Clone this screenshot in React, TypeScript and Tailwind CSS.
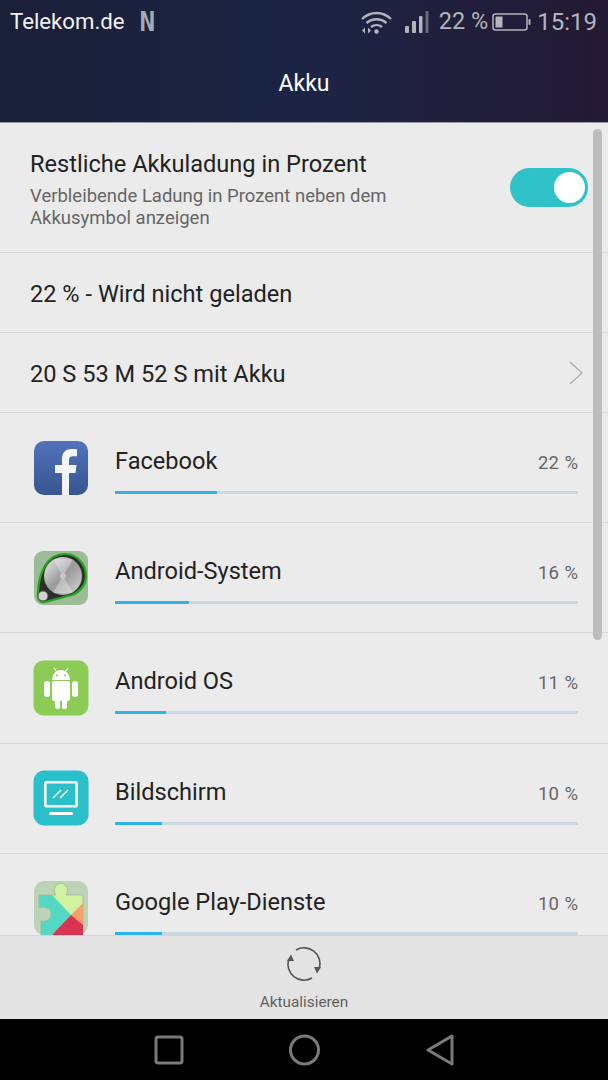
import { ReactNode } from "react";

const APPS: { name: string; pct: number; bar: number; icon: ReactNode }[] = [
  { name: "Facebook", pct: 22, bar: 102, icon: <FacebookIcon /> },
  { name: "Android-System", pct: 16, bar: 74, icon: <SystemIcon /> },
  { name: "Android OS", pct: 11, bar: 51, icon: <DroidIcon /> },
  { name: "Bildschirm", pct: 10, bar: 47, icon: <ScreenIcon /> },
  { name: "Google Play-Dienste", pct: 10, bar: 47, icon: <PlayIcon /> },
];

function FacebookIcon() {
  return (
    <svg width="56" height="56" viewBox="0 0 56 56">
      <defs>
        <linearGradient id="fb" x1="0" y1="0" x2="0" y2="1">
          <stop offset="0" stopColor="#5273bd" />
          <stop offset="1" stopColor="#37558f" />
        </linearGradient>
      </defs>
      <rect x="1" y="1" width="54" height="54" rx="10" fill="url(#fb)" />
      <path
        d="M29 55V33h-7v-8h7v-6c0-7 4-10 10-10 2.500 0 4 .2 5 .3v7h-4c-3 0-4 1.500-4 4v4.700h7.500l-1 8H36v22z"
        fill="#f3f5f9"
      />
    </svg>
  );
}

function SystemIcon() {
  return (
    <svg width="56" height="56" viewBox="0 0 56 56">
      <defs>
        <linearGradient id="knob" x1="0" y1="0" x2="1" y2="1">
          <stop offset="0" stopColor="#eeeeee" />
          <stop offset="0.5" stopColor="#9a9a9a" />
          <stop offset="1" stopColor="#d5d5d5" />
        </linearGradient>
      </defs>
      <rect x="1" y="1" width="54" height="54" rx="9" fill="#9dbb96" />
      <path
        d="M5 42C6 24 13 4 32 4c12 0 21 10 21 22 0 9-6 16-14 19L12 52c-5 1-8-3-7-10z"
        fill="#2e2e2e"
        stroke="#1fa81f"
        strokeWidth="2.200"
      />
      <circle cx="30" cy="26" r="19" fill="url(#knob)" />
      <path d="M30 26L20 9h20zM30 26L20 43h20z" fill="#f4f4f4" opacity="0.35" />
      <circle cx="30" cy="26" r="3" fill="#c8c8c8" />
      <circle cx="10" cy="46" r="5" fill="#d2d2d2" stroke="#555" strokeWidth="1" />
    </svg>
  );
}

function DroidIcon() {
  return (
    <svg width="56" height="56" viewBox="0 0 56 56">
      <rect x="0.500" y="0.500" width="55" height="55" rx="10" fill="#8bcb56" />
      <g fill="#fff">
        <path d="M19 20c.5-6 4-10 9-10s8.500 4 9 10z" />
        <rect x="19" y="21" width="18" height="20" rx="2" />
        <rect x="11" y="21" width="6" height="16" rx="3" />
        <rect x="39" y="21" width="6" height="16" rx="3" />
        <rect x="22" y="38" width="5" height="11" rx="2.500" />
        <rect x="29" y="38" width="5" height="11" rx="2.500" />
      </g>
      <path d="M21 8l3 4M35 8l-3 4" stroke="#fff" strokeWidth="1.200" />
      <circle cx="24" cy="15.500" r="1" fill="#8bcb56" />
      <circle cx="32" cy="15.500" r="1" fill="#8bcb56" />
    </svg>
  );
}

function ScreenIcon() {
  return (
    <svg width="56" height="56" viewBox="0 0 56 56">
      <rect x="0.500" y="0.500" width="55" height="55" rx="11" fill="#2ac0c9" />
      <rect x="12.300" y="12.300" width="31.400" height="24" rx="1.500" fill="none" stroke="#fff" strokeWidth="2.600" />
      <path d="M20 28l8-8M27 28l8-8" stroke="#fff" strokeWidth="1.500" />
      <rect x="16" y="42" width="24" height="3" rx="1.500" fill="#fff" />
    </svg>
  );
}

function PlayIcon() {
  return (
    <svg width="56" height="56" viewBox="0 0 56 56">
      <rect x="1" y="1" width="54" height="54" rx="10" fill="#bcd3b4" />
      <path
        d="M6 15h17c-2-3-3-10 5-12 8 2 7 9 5 12h17v41H8V41c6 1 10-2 10-7s-4-8-12-6z"
        fill="#cff3a0"
        stroke="#9aa79a"
        strokeWidth="0.600"
      />
      <path d="M6 15h13l19 20-20 21H8V41c6 1 10-2 10-7s-4-8-12-6z" fill="#54d8c4" />
      <path d="M38 35l12-12v22z" fill="#f5a06d" />
      <path d="M38 35l12 10v11H18z" fill="#d83350" />
    </svg>
  );
}

function WifiIcon() {
  return (
    <svg width="31" height="23" viewBox="0 0 31 23" fill="none" stroke="#b4b4bc" strokeWidth="2.400">
      <path d="M1 8c8.500-8 20.500-8 29 0" />
      <path d="M5.500 12c6-5 14-5 20 0" />
      <path d="M10 16c3.200-2.500 7.800-2.500 11 0" />
      <circle cx="15.500" cy="20.500" r="2.200" fill="#b4b4bc" stroke="none" />
      <path d="M1 19.500l3-3v6zM10 19.500l-3-3v6z" fill="#b4b4bc" stroke="none" />
    </svg>
  );
}

function SignalIcon() {
  return (
    <svg width="24" height="22" viewBox="0 0 24 22" fill="#b4b4bc">
      <rect x="0" y="15" width="4" height="7" rx="1" />
      <rect x="7" y="10" width="4" height="12" rx="1" />
      <rect x="14" y="5" width="3.500" height="17" rx="1" />
      <rect x="20.500" y="0" width="3" height="22" fill="#6b6b72" />
    </svg>
  );
}

function BatteryIcon() {
  return (
    <svg width="39" height="18" viewBox="0 0 39 18">
      <rect x="1" y="1" width="34" height="16" rx="2.500" fill="none" stroke="#b4b4bc" strokeWidth="1.500" />
      <rect x="3.500" y="3.500" width="7" height="11" fill="#b4b4bc" />
      <rect x="36.500" y="6" width="2" height="6" rx="1" fill="#b4b4bc" />
    </svg>
  );
}

function AppRow({ name, pct, bar, icon }: { name: string; pct: number; bar: number; icon: ReactNode }) {
  return (
    <div className="flex h-[110.200px] shrink-0 border-b border-[#d9d9d9] pl-[33px] pr-[30px]">
      <div className="mt-[26.500px] h-14 w-14 shrink-0">{icon}</div>
      <div className="ml-[26px] flex-1 pt-[31px]">
        <div className="flex items-center justify-between">
          <span className="text-[23.600px] leading-[34px] text-[#222222]">{name}</span>
          <span className="translate-y-[2px] text-[18.500px] leading-[34px] text-[#666666] [word-spacing:1px]">{pct} %</span>
        </div>
        <div className="mt-[13px] h-[3px] w-full bg-[#ccd8df]">
          <div className="h-[3px] bg-[#2db4e8]" style={{ width: bar }} />
        </div>
      </div>
    </div>
  );
}

export default function App() {
  return (
    <div className="flex h-[1080px] w-[608px] flex-col overflow-hidden bg-[#ebebeb] font-['Roboto',sans-serif]">
      <header className="h-[122px] shrink-0 bg-gradient-to-r from-[#1a2038] via-[#1c2445] to-[#231a33]">
        <div className="flex h-[44px] items-center pl-[10px] pr-[11px]">
          <span className="text-[22.200px] text-[#f2f2f2]">Telekom.de</span>
          <span className="ml-[15px] font-['DejaVu_Sans_Mono',monospace] text-[26px] leading-none font-bold text-[#a9a9b0]">N</span>
          <div className="ml-auto flex items-center">
            <WifiIcon />
            <div className="ml-[13px]">
              <SignalIcon />
            </div>
            <span className="ml-[10px] text-[23.500px] text-[#b4b4bc]">22 %</span>
            <div className="ml-[4px]">
              <BatteryIcon />
            </div>
            <span className="ml-[6px] text-[24px] text-[#b4b4bc]">15:19</span>
          </div>
        </div>
        <div className="mt-[24px] text-center text-[23px] leading-[32px] text-white">Akku</div>
      </header>
      <div className="h-[1px] shrink-0 bg-[#9a9a9a]" />

      <main className="relative min-h-0 flex-1 overflow-hidden">
        <div className="box-content flex h-[129px] border-b border-[#d9d9d9] pl-[30px] pr-[20px]">
          <div className="flex-1 pt-[25px]">
            <div className="text-[23.600px] leading-[32px] text-[#222222]">Restliche Akkuladung in Prozent</div>
            <div className="mt-[5px] w-[380px] text-[18.500px] leading-[22px] text-[#666666]">
              Verbleibende Ladung in Prozent neben dem Akkusymbol anzeigen
            </div>
          </div>
          <div className="mt-[45px] flex h-[39px] w-[78px] items-center justify-end rounded-full bg-[#2fc2c9] pr-[3px]">
            <div className="h-[31px] w-[31px] rounded-full bg-white" />
          </div>
        </div>
        <div className="flex h-20 items-center border-b border-[#d9d9d9] pl-[30px] pt-[4px] text-[23.600px] text-[#222222]">
          22 % - Wird nicht geladen
        </div>
        <div className="flex h-20 items-center justify-between border-b border-[#d9d9d9] pl-[30px] pr-[25px] text-[23.600px] text-[#222222]">
          <span className="translate-y-[2px]">20 S 53 M 52 S mit Akku</span>
          <svg width="14" height="24" viewBox="0 0 14 24" fill="none" stroke="#a8a8a8" strokeWidth="1.200">
            <path d="M1 1l12 11L1 23" />
          </svg>
        </div>
        {APPS.map((a) => (
          <AppRow key={a.name} {...a} />
        ))}
        {/* scroll indicator sits over the list */}
        <div className="absolute left-[593px] top-[6px] h-[511px] w-[9px] rounded-full bg-[#bdbdbd]" />
      </main>

      <footer className="flex h-[84px] shrink-0 flex-col items-center border-t border-[#d4d4d4] bg-[#e3e3e3]">
        <svg className="mt-[10px]" width="36" height="36" viewBox="0 0 36 36" fill="none" stroke="#555555" strokeWidth="1.600">
          <path d="M10 4A16 16 0 0 1 33.500 22" />
          <path d="M26 32A16 16 0 0 1 2.500 14" />
          <path d="M28 21h7l-4 6.500zM8 15H1l4-6.500z" fill="#555555" stroke="none" />
        </svg>
        <span className="mt-[10px] text-[15.300px] leading-[20px] text-[#5f5f5f]">Aktualisieren</span>
      </footer>

      <nav className="flex h-[61px] shrink-0 items-center bg-black">
        <div className="flex w-full items-center justify-center gap-[105px]">
          <svg width="30" height="30" viewBox="0 0 30 30" fill="none" stroke="#7a7a7a" strokeWidth="3">
            <rect x="2" y="2" width="26" height="26" rx="2" />
          </svg>
          <svg width="32" height="32" viewBox="0 0 32 32" fill="none" stroke="#7a7a7a" strokeWidth="3">
            <circle cx="15.500" cy="16" r="14" />
          </svg>
          <svg width="28" height="32" viewBox="0 0 28 32" fill="none" stroke="#7a7a7a" strokeWidth="3" strokeLinejoin="round">
            <path d="M26 2v28L2 16z" />
          </svg>
        </div>
      </nav>
    </div>
  );
}
